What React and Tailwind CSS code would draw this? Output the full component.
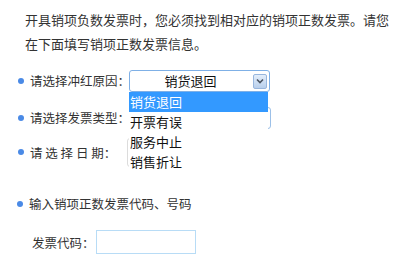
import React from "react";

const font = { fontFamily: '"Noto Sans CJK SC", "Noto Sans", sans-serif' };

function Dot() {
    return <span className="inline-block w-[6px] h-[6px] rounded-full bg-[#4a8ae6] mr-[6px] shrink-0" />;
}

export default function App() {
    const options = ["销货退回", "开票有误", "服务中止", "销售折让"];

    return (
        <div
            className="w-[411px] h-[276px] overflow-hidden bg-white text-[12.5px] text-[#333] whitespace-nowrap"
            style={font}
        >
            <p className="ml-[25px] mt-[8px] leading-[24px] text-[13px]">
                开具销项负数发票时，您必须找到相对应的销项正数发票。请您
                <br />
                在下面填写销项正数发票信息。
            </p>

            {/* 冲红原因 */}
            <div className="ml-[18px] mt-[14px] h-[22px] flex items-center">
                <Dot />
                <span className="w-[99px] shrink-0">请选择冲红原因：</span>
                <div className="relative w-[141px] h-[22px] shrink-0">
                    <div className="h-full border border-[#7fb0e6] rounded-[3px] bg-white flex items-center">
                        <span className="flex-1 text-center text-[13px] text-[#111] pr-[2px]">销货退回</span>
                        <span className="mr-[2px] w-[14px] h-[15px] border border-[#98b6dd] rounded-[2px] bg-gradient-to-b from-[#e4eefa] to-[#b8cfec] flex items-center justify-center">
                            <svg width="8" height="6" viewBox="0 0 8 6">
                                <path d="M1 1.5 L4 4.5 L7 1.5" fill="none" stroke="#4b5563" strokeWidth="1.6" />
                            </svg>
                        </span>
                    </div>
                    <ul className="absolute left-0 top-[22px] w-[139px] bg-white z-10 text-[13px] text-[#111]">
                        {options.map((o, i) => (
                            <li
                                key={o}
                                className={
                                    i === 0
                                        ? "h-[20px] leading-[20px] pl-[1px] bg-[#3399ff] text-white"
                                        : "h-[20px] leading-[20px] pl-[1px]"
                                }
                            >
                                {o}
                            </li>
                        ))}
                    </ul>
                </div>
            </div>

            {/* 发票类型 */}
            <div className="ml-[18px] mt-[15px] h-[22px] flex items-center">
                <Dot />
                <span className="w-[99px] shrink-0">请选择发票类型：</span>
                <div className="w-[142px] h-[22px] shrink-0 border border-[#9cc0e8] rounded-[3px]" />
            </div>

            {/* 日期 */}
            <div className="ml-[18px] mt-[8px] h-[30px] flex items-center">
                <Dot />
                <span className="w-[97px] shrink-0 pt-[2px]">请 选 择 日 期：</span>
                <div className="w-[120px] h-[29px] shrink-0 border border-[#dcdcdc] rounded-[3px]" />
            </div>

            {/* 代码号码 */}
            <div className="ml-[17px] mt-[27px] h-[20px] flex items-center">
                <Dot />
                <span>输入销项正数发票代码、号码</span>
            </div>

            <div className="ml-[32px] mt-[16px] h-[24px] flex items-center">
                <span className="w-[64px] shrink-0 pt-[3px]">发票代码：</span>
                <div className="w-[100px] h-[24px] shrink-0 border border-[#b8dcf6]" />
            </div>
        </div>
    );
}
